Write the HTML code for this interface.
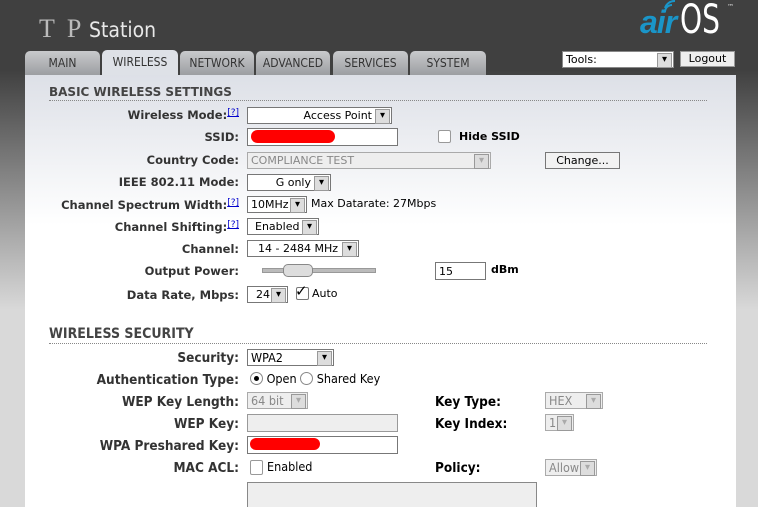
<!DOCTYPE html>
<html style="overflow:hidden;background:#d9d9d9"><head><meta charset="utf-8"><style>
*{margin:0;padding:0;box-sizing:border-box}
body{width:758px;height:507px;overflow:hidden;position:relative;font-family:"DejaVu Sans","Liberation Sans",sans-serif;font-size:11px;color:#000}
.bg{position:absolute;left:0;top:0;width:758px;height:507px;background:linear-gradient(#404040 0,#404040 70px,#d9d9d9 310px,#d9d9d9 507px)}
.a{position:absolute;white-space:nowrap}
.panel{position:absolute;left:25px;top:75px;width:711px;height:432px;background:linear-gradient(#dde0e7 0,#ffffff 150px)}
.tab{position:absolute;top:51px;height:24px;background:linear-gradient(#c9cacc,#9c9ea2);border-radius:5px 5px 0 0;font-family:"DejaVu Sans Condensed",sans-serif;font-size:12px;color:#333;text-align:center;line-height:25px}
.tab.on{background:#dee1e7;top:50px;height:25px}
.lbl{position:absolute;right:519px;font-weight:bold;font-size:11.5px;color:#333;white-space:nowrap}
.n{font-family:"DejaVu Sans Condensed",sans-serif;font-size:12.5px}
.lbl.n{font-size:13.5px;line-height:16px}
.h{position:absolute;left:49px;width:658px;font-weight:bold;font-size:12px;color:#444;border-bottom:1px dotted #888;padding-bottom:1px}
.sel{position:absolute;height:17px;background:#fff;border:1px solid #777;font-size:11px;line-height:15px;padding-left:3px;white-space:nowrap}
.sel:after{content:"▾";position:absolute;right:1px;top:1px;width:13px;height:13px;background:#ddd;border:1px solid #999;font-size:10px;line-height:12px;text-align:center;color:#000;font-family:"DejaVu Sans",sans-serif}
.sel.n{font-size:12.5px;line-height:15px}
.dis{background:#eee;color:#888;border-color:#aaa}
.dis:after{color:#aaa}
.inp{position:absolute;height:18px;background:#fff;border:1px solid #777}
.q{font-size:9px;color:#00c;text-decoration:underline;vertical-align:top;font-weight:normal}
.red{position:absolute;background:#f00;border-radius:8px}
.cb{position:absolute;width:13px;height:13px;border:1px solid #999;background:#fff;border-radius:2px}
.rad{display:inline-block;width:13px;height:13px;border:1px solid #888;border-radius:50%;vertical-align:-2px;background:#fff;position:relative}
.k{font-weight:bold;font-size:13.5px;line-height:16px}
</style></head><body>
<div class="bg"></div>
<div class="a" style="left:39px;top:14px;font-family:'Liberation Serif',serif;font-size:26px;color:#bbb;letter-spacing:3px">T P</div>
<div class="a" style="left:89px;top:18px;font-family:'DejaVu Sans Condensed',sans-serif;font-size:21px;color:#e8e8e8">Station</div>
<div class="a" style="left:640px;top:4px;font-family:'Liberation Sans',sans-serif;font-style:italic;font-weight:bold;font-size:32px;color:#1a95c8;letter-spacing:-1px">air</div>
<div class="a" style="left:680px;top:-3px;font-family:'DejaVu Sans Condensed',sans-serif;font-size:40px;color:#fff;transform:scaleX(0.78);transform-origin:left top">OS</div>
<div class="a" style="left:727px;top:3px;font-size:7px;color:#ddd">™</div>
<svg class="a" style="left:662px;top:0" width="18" height="14"><path d="M3 12 a7 7 0 0 1 7 -7 M3 8 a10 10 0 0 1 10 -7" stroke="#1a95c8" stroke-width="2" fill="none"/></svg>
<div class="sel" style="left:562px;top:51px;width:112px;border-color:#888">Tools:</div>
<div class="a" style="left:680px;top:51px;width:55px;height:16px;background:#eee;border:1px solid #999;text-align:center;font-size:11px;line-height:14px">Logout</div>
<div class="panel"></div>
<div class="tab" style="left:25px;width:75px">MAIN</div>
<div class="tab on" style="left:102px;width:76px">WIRELESS</div>
<div class="tab" style="left:180px;width:74px">NETWORK</div>
<div class="tab" style="left:256px;width:74px">ADVANCED</div>
<div class="tab" style="left:333px;width:75px">SERVICES</div>
<div class="tab" style="left:410px;width:76px">SYSTEM</div>

<div class="h" style="top:85px">BASIC WIRELESS SETTINGS</div>
<div class="lbl" style="top:108px">Wireless Mode:<span class="q">[?]</span></div>
<div class="sel" style="left:247px;top:107px;width:145px;text-align:right;padding-right:19px">Access Point</div>
<div class="lbl" style="top:130px">SSID:</div>
<div class="inp" style="left:247px;top:128px;width:151px"></div>
<div class="red" style="left:251px;top:130px;width:84px;height:13px"></div>
<div class="cb" style="left:438px;top:130px"></div>
<div class="a" style="left:459px;top:130px;font-weight:bold">Hide SSID</div>
<div class="lbl" style="top:153px">Country Code:</div>
<div class="sel dis" style="left:247px;top:152px;width:244px">COMPLIANCE TEST</div>
<div class="a" style="left:545px;top:152px;width:75px;height:17px;border:1px solid #777;background:#f2f2f2;text-align:center;line-height:15px">Change...</div>
<div class="lbl" style="top:175px">IEEE 802.11 Mode:</div>
<div class="sel" style="left:247px;top:174px;width:84px;text-align:right;padding-right:19px">G only</div>
<div class="lbl" style="top:198px">Channel Spectrum Width:<span class="q">[?]</span></div>
<div class="sel" style="left:247px;top:196px;width:60px">10MHz</div>
<div class="a" style="left:311px;top:197px">Max Datarate: 27Mbps</div>
<div class="lbl" style="top:220px">Channel Shifting:<span class="q">[?]</span></div>
<div class="sel" style="left:247px;top:218px;width:72px;padding-left:7px">Enabled</div>
<div class="lbl" style="top:242px">Channel:</div>
<div class="sel" style="left:247px;top:240px;width:112px;padding-left:10px">14 - 2484 MHz</div>
<div class="lbl" style="top:264px">Output Power:</div>
<div class="a" style="left:262px;top:268px;width:114px;height:5px;background:#bbb;border:1px solid #999"></div>
<div class="a" style="left:283px;top:264px;width:30px;height:13px;background:#ddd;border:1px solid #888;border-radius:5px"></div>
<div class="inp" style="left:435px;top:262px;width:51px;font-size:11px;padding:2px 3px">15</div>
<div class="a" style="left:491px;top:263px;font-weight:bold">dBm</div>
<div class="lbl" style="top:288px">Data Rate, Mbps:</div>
<div class="sel" style="left:247px;top:286px;width:41px;padding-left:8px">24</div>
<div class="cb" style="left:296px;top:287px;border-color:#777"></div>
<div class="a" style="left:295px;top:282px;font-size:15px;font-weight:bold">✓</div>
<div class="a" style="left:312px;top:287px">Auto</div>

<div class="h n" style="top:326px;font-size:14px">WIRELESS SECURITY</div>
<div class="lbl n" style="top:350px">Security:</div>
<div class="sel n" style="left:247px;top:349px;width:87px">WPA2</div>
<div class="lbl n" style="top:372px">Authentication Type:</div>
<div class="a n" style="left:250px;top:371px"><span class="rad"><span style="position:absolute;left:3px;top:3px;width:5px;height:5px;border-radius:50%;background:#000"></span></span> Open <span class="rad"></span> Shared Key</div>
<div class="lbl n" style="top:394px">WEP Key Length:</div>
<div class="sel dis n" style="left:247px;top:392px;width:61px">64 bit</div>
<div class="a n k" style="left:435px;top:394px">Key Type:</div>
<div class="sel dis n" style="left:545px;top:392px;width:58px">HEX</div>
<div class="lbl n" style="top:416px">WEP Key:</div>
<div class="inp" style="left:247px;top:414px;width:151px;background:#eee;border-color:#999"></div>
<div class="a n k" style="left:435px;top:416px">Key Index:</div>
<div class="sel dis n" style="left:545px;top:414px;width:29px">1</div>
<div class="lbl n" style="top:438px">WPA Preshared Key:</div>
<div class="inp" style="left:247px;top:436px;width:151px"></div>
<div class="red" style="left:250px;top:438px;width:70px;height:12px"></div>
<div class="lbl n" style="top:460px">MAC ACL:</div>
<div class="cb" style="left:250px;top:460px;width:13px;height:15px"></div>
<div class="a n" style="left:267px;top:459px">Enabled</div>
<div class="a n k" style="left:435px;top:460px">Policy:</div>
<div class="sel dis n" style="left:545px;top:459px;width:52px">Allow</div>
<div class="a" style="left:247px;top:482px;width:290px;height:30px;background:#eee;border:1px solid #888"></div>
</body></html>
